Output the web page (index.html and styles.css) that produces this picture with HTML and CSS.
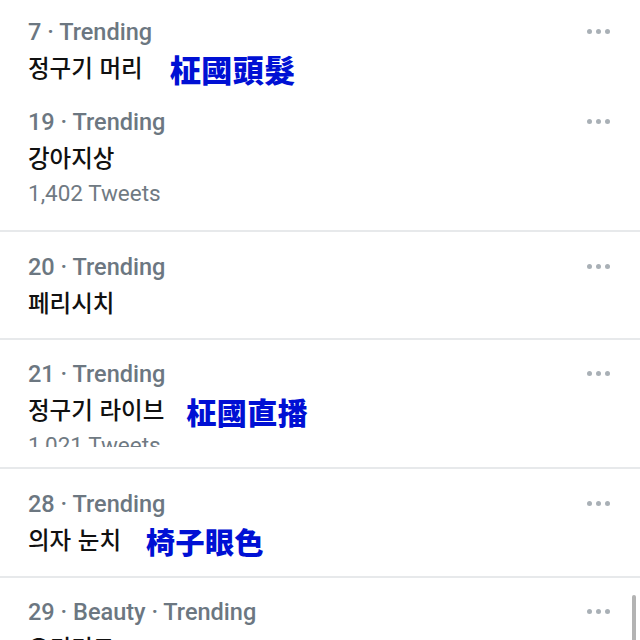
FILE: index.html
```html
<!DOCTYPE html>
<html lang="ko">
<head>
    <meta charset="UTF-8">
    <title>Trending</title>
    <link rel="stylesheet" href="styles.css">
</head>
<body>
    <div id="page">
        <div class="sec sec1">
            <div class="trend">
                <div class="meta"><span>7 · Trending</span><i class="more"><b></b><b></b><b></b></i></div>
                <div class="title">정구기 머리<span class="note">柾國頭髮</span></div>
            </div>
            <div class="trend next">
                <div class="meta"><span>19 · Trending</span><i class="more"><b></b><b></b><b></b></i></div>
                <div class="title">강아지상</div>
                <div class="count">1,402 Tweets</div>
            </div>
        </div>
        <div class="sec sec2">
            <div class="trend">
                <div class="meta"><span>20 · Trending</span><i class="more"><b></b><b></b><b></b></i></div>
                <div class="title">페리시치</div>
            </div>
        </div>
        <div class="sec sec3">
            <div class="trend cut">
                <div class="meta"><span>21 · Trending</span><i class="more"><b></b><b></b><b></b></i></div>
                <div class="title">정구기 라이브<span class="note n2">柾國直播</span></div>
                <div class="count">1,021 Tweets</div>
            </div>
        </div>
        <div class="sec sec4">
            <div class="trend">
                <div class="meta"><span>28 · Trending</span><i class="more"><b></b><b></b><b></b></i></div>
                <div class="title">의자 눈치<span class="note n3">椅子眼色</span></div>
            </div>
        </div>
        <div class="sec sec5">
            <div class="trend">
                <div class="meta"><span>29 · Beauty · Trending</span><i class="more"><b></b><b></b><b></b></i></div>
                <div class="title">오키리드</div>
            </div>
        </div>
        <div class="scroll"></div>
    </div>
</body>
</html>
```

FILE: styles.css
```css
* {
    margin: 0;
    padding: 0;
}
body {
    background: #fff;
}
#page {
    position: relative;
    width: 640px;
    height: 640px;
    overflow: hidden;
    display: flex;
    flex-direction: column;
    font-family: Roboto, "Noto Sans CJK KR", sans-serif;
}
.sec {
    flex: none;
    overflow: hidden;
    padding: 0 30px 0 28px;
    border-bottom: 2px solid #e7e9eb;
}
.sec1 {
    height: 215px;
    padding-top: 15px;
}
.sec2 {
    height: 88px;
    padding-top: 18px;
}
.sec3 {
    height: 110px;
    padding-top: 17px;
}
.sec4 {
    height: 89px;
    padding-top: 18px;
}
.sec5 {
    height: 80px;
    padding-top: 17px;
    border-bottom: 0;
}
.trend.next {
    margin-top: 20px;
}
.trend.cut {
    height: 90px;
    overflow: hidden;
}
.meta {
    display: flex;
    justify-content: space-between;
    align-items: center;
    height: 34px;
    font-size: 23.5px;
    font-weight: 500;
    color: #6c7781;
}
.more {
    display: flex;
    gap: 4px;
    margin-top: -2px;
}
.more b {
    width: 5px;
    height: 5px;
    border-radius: 50%;
    background: #a9b0b6;
}
.title {
    display: flex;
    align-items: center;
    height: 36px;
    font-family: "Noto Sans CJK KR", sans-serif;
    font-size: 23.5px;
    font-weight: 500;
    color: #111;
}
.note {
    margin-left: 27px;
    margin-top: 3px;
    font-family: "Noto Sans CJK TC", sans-serif;
    font-size: 31px;
    font-weight: 900;
    color: #0010d4;
    letter-spacing: 0.5px;
}
.note.n2 {
    margin-left: 22px;
    font-size: 30px;
}
.note.n3 {
    margin-left: 25px;
    font-size: 29px;
}
.count {
    height: 36px;
    line-height: 36px;
    font-size: 22.5px;
    color: #707a83;
}
.scroll {
    position: absolute;
    right: 4px;
    top: 595px;
    width: 4px;
    height: 60px;
    border-radius: 2px;
    background: #b3b3b3;
}
```
